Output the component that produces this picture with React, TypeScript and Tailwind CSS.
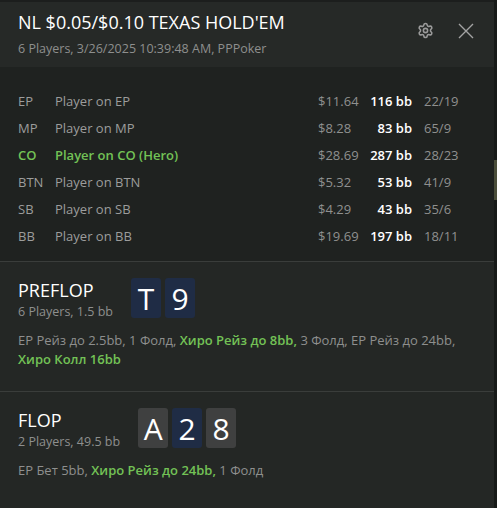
import { Settings } from 'lucide-react'

const players = [
  { pos: 'EP', name: 'Player on EP', amount: '$11.64', bb: '116 bb', ratio: '22/19' },
  { pos: 'MP', name: 'Player on MP', amount: '$8.28', bb: '83 bb', ratio: '65/9' },
  { pos: 'CO', name: 'Player on CO (Hero)', amount: '$28.69', bb: '287 bb', ratio: '28/23', hero: true },
  { pos: 'BTN', name: 'Player on BTN', amount: '$5.32', bb: '53 bb', ratio: '41/9' },
  { pos: 'SB', name: 'Player on SB', amount: '$4.29', bb: '43 bb', ratio: '35/6' },
  { pos: 'BB', name: 'Player on BB', amount: '$19.69', bb: '197 bb', ratio: '18/11' },
]

type Card = { rank: string; suit: 'blue' | 'grey' }

const streets: {
  name: string
  info: string
  cards: Card[]
  actions: { text: string; hero?: boolean }[]
}[] = [
  {
    name: 'PREFLOP',
    info: '6 Players, 1.5 bb',
    cards: [
      { rank: 'T', suit: 'blue' },
      { rank: '9', suit: 'blue' },
    ],
    actions: [
      { text: 'EP Рейз до 2.5bb, 1 Фолд, ' },
      { text: 'Хиро Рейз до 8bb,', hero: true },
      { text: ' 3 Фолд, EP Рейз до 24bb, ' },
      { text: 'Хиро Колл 16bb', hero: true },
    ],
  },
  {
    name: 'FLOP',
    info: '2 Players, 49.5 bb',
    cards: [
      { rank: 'A', suit: 'grey' },
      { rank: '2', suit: 'blue' },
      { rank: '8', suit: 'grey' },
    ],
    actions: [
      { text: 'EP Бет 5bb, ' },
      { text: 'Хиро Рейз до 24bb,', hero: true },
      { text: ' 1 Фолд' },
    ],
  },
]

export default function App() {
  return (
    <div
      className="flex w-[497px] h-[508px] overflow-hidden bg-[#1d201e]"
      style={{ fontFamily: '"Open Sans", "Noto Sans", sans-serif' }}
    >
      <div className="w-[494px] flex flex-col">
        {/* Header */}
        <div className="h-[67px] bg-[#262927] border-t-2 border-[#1c1e1d] flex items-start justify-between pl-[18px] pr-5 pt-2">
          <div>
            <div className="text-[18px] leading-6 text-white">NL $0.05/$0.10 TEXAS HOLD'EM</div>
            <div className="text-[12.5px] leading-[18px] text-[#8e8f8e] mt-[6px]">
              6 Players, 3/26/2025 10:39:48 AM, PPPoker
            </div>
          </div>
          <div className="flex items-center gap-[24px] mt-[12px]">
            <Settings className="w-[17px] h-[17px] text-[#9a9a9a]" strokeWidth={2.2} />
            <svg width="16" height="16" viewBox="0 0 16 16" className="text-[#a3a3a3]">
              <path d="M1 1L15 15M15 1L1 15" stroke="currentColor" strokeWidth="1.4" fill="none" />
            </svg>
          </div>
        </div>

        {/* Players */}
        <div className="bg-[#1f2220] pl-[18px] pr-5 pt-[21px] pb-[11px]">
          {players.map((p) => (
            <div
              key={p.pos}
              className={`grid grid-cols-[37px_1fr_51px_43px_62px] h-[27px] items-center text-[13px] ${
                p.hero ? 'text-[#73c256] font-semibold' : 'text-[#9c9d9c]'
              }`}
            >
              <span>{p.pos}</span>
              <span>{p.name}</span>
              <span className="text-[#8f908f] font-normal">{p.amount}</span>
              <span className="text-right text-white font-semibold">{p.bb}</span>
              <span className="pl-3 text-[#8f908f] font-normal">{p.ratio}</span>
            </div>
          ))}
        </div>

        {/* Streets */}
        {streets.map((s) => (
          <div key={s.name} className="bg-[#242725] border-t border-[#3a3d3b] pl-[18px] pr-5 pt-4 pb-[22px]">
            <div className="flex items-start gap-[18px]">
              <div>
                <div className="text-[18px] leading-6 text-white">{s.name}</div>
                <div className="text-[12.5px] leading-[18px] text-[#8e8f8e] mt-px">{s.info}</div>
              </div>
              <div className="flex gap-1">
                {s.cards.map((c, i) => (
                  <div
                    key={i}
                    className={`w-[30px] h-[40px] rounded-[3px] flex items-center justify-center text-[30px] text-white ${
                      c.suit === 'blue' ? 'bg-[#1f2c45]' : 'bg-[#3f4040]'
                    }`}
                  >
                    {c.rank}
                  </div>
                ))}
              </div>
            </div>
            <p className="mt-[10px] text-[13px] leading-[19px] text-[#8e8f8e]">
              {s.actions.map((a, i) => (
                <span key={i} className={a.hero ? 'text-[#73c256] font-semibold' : ''}>
                  {a.text}
                </span>
              ))}
            </p>
          </div>
        ))}
        <div className="flex-1 bg-[#242725]" />
      </div>

      {/* Scrollbar strip */}
      <div className="w-[3px] flex flex-col bg-[#171a18]">
        <div className="h-[160px]" />
        <div className="h-[40px] bg-[#4a4d3a]" />
      </div>
    </div>
  )
}
